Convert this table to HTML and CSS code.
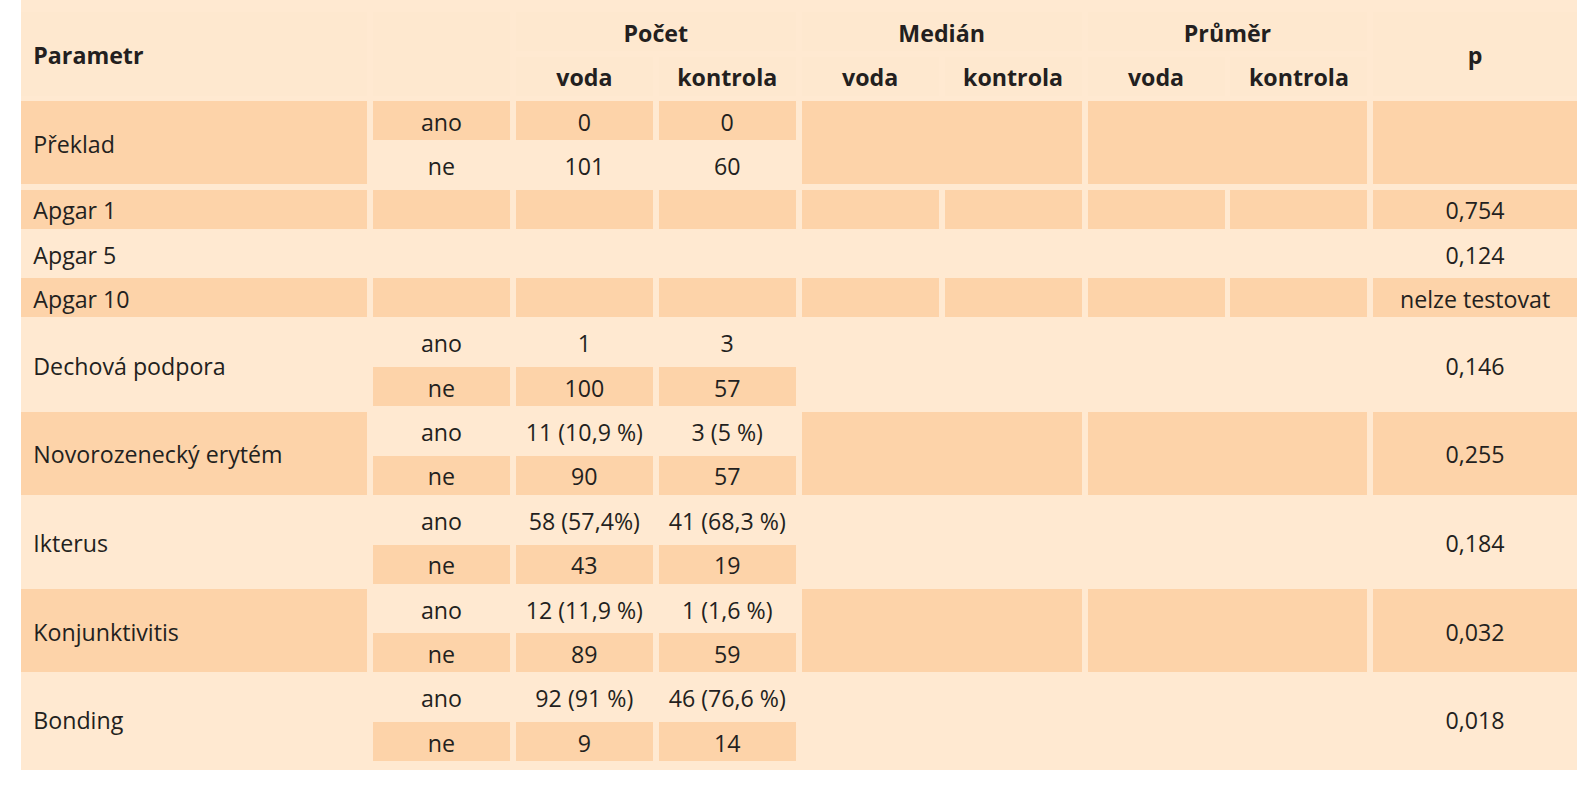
FILE: index.html
```html
<!DOCTYPE html>
<html lang="cs">
<head>
<meta charset="utf-8">
<title>Tabulka</title>
<link rel="stylesheet" href="styles.css">
</head>
<body>
<div class="tbl">
  <!-- header -->
  <div class="h r2 left">Parametr</div>
  <div class="h r2"></div>
  <div class="h s2">Počet</div>
  <div class="h s2">Medián</div>
  <div class="h s2">Průměr</div>
  <div class="h r2">p</div>
  <div class="h">voda</div>
  <div class="h">kontrola</div>
  <div class="h">voda</div>
  <div class="h">kontrola</div>
  <div class="h">voda</div>
  <div class="h">kontrola</div>

  <!-- Překlad -->
  <div class="d r2 left">Překlad</div>
  <div class="d">ano</div>
  <div class="d">0</div>
  <div class="d">0</div>
  <div class="d r2 s2"></div>
  <div class="d r2 s2"></div>
  <div class="d r2"></div>
  <div>ne</div>
  <div>101</div>
  <div>60</div>

  <!-- Apgar 1 -->
  <div class="d left">Apgar 1</div>
  <div class="d"></div>
  <div class="d"></div>
  <div class="d"></div>
  <div class="d"></div>
  <div class="d"></div>
  <div class="d"></div>
  <div class="d"></div>
  <div class="d">0,754</div>

  <!-- Apgar 5 -->
  <div class="left">Apgar 5</div>
  <div class="s7"></div>
  <div>0,124</div>

  <!-- Apgar 10 -->
  <div class="d left">Apgar 10</div>
  <div class="d"></div>
  <div class="d"></div>
  <div class="d"></div>
  <div class="d"></div>
  <div class="d"></div>
  <div class="d"></div>
  <div class="d"></div>
  <div class="d">nelze testovat</div>

  <!-- Dechová podpora -->
  <div class="r2 left">Dechová podpora</div>
  <div>ano</div>
  <div>1</div>
  <div>3</div>
  <div class="r2 s4"></div>
  <div class="r2">0,146</div>
  <div class="d">ne</div>
  <div class="d">100</div>
  <div class="d">57</div>

  <!-- Novorozenecký erytém -->
  <div class="d r2 left">Novorozenecký erytém</div>
  <div>ano</div>
  <div>11 (10,9 %)</div>
  <div>3 (5 %)</div>
  <div class="d r2 s2"></div>
  <div class="d r2 s2"></div>
  <div class="d r2">0,255</div>
  <div class="d">ne</div>
  <div class="d">90</div>
  <div class="d">57</div>

  <!-- Ikterus -->
  <div class="r2 left">Ikterus</div>
  <div>ano</div>
  <div>58 (57,4%)</div>
  <div>41 (68,3 %)</div>
  <div class="r2 s4"></div>
  <div class="r2">0,184</div>
  <div class="d">ne</div>
  <div class="d">43</div>
  <div class="d">19</div>

  <!-- Konjunktivitis -->
  <div class="d r2 left">Konjunktivitis</div>
  <div>ano</div>
  <div>12 (11,9 %)</div>
  <div>1 (1,6 %)</div>
  <div class="d r2 s2"></div>
  <div class="d r2 s2"></div>
  <div class="d r2">0,032</div>
  <div class="d">ne</div>
  <div class="d">89</div>
  <div class="d">59</div>

  <!-- Bonding -->
  <div class="r2 left">Bonding</div>
  <div>ano</div>
  <div>92 (91 %)</div>
  <div>46 (76,6 %)</div>
  <div class="r2 s4"></div>
  <div class="r2">0,018</div>
  <div class="d">ne</div>
  <div class="d">9</div>
  <div class="d">14</div>
</div>
</body>
</html>
```

FILE: styles.css
```css
html, body {
  margin: 0;
  padding: 0;
  background: #ffffff;
}

body {
  font-family: "Open Sans", "Noto Sans", sans-serif;
  font-size: 23.2px;
  line-height: 1.33;
  color: #231f20;
}

.tbl {
  margin-left: 20.7px;
  width: 1556.3px;
  box-sizing: border-box;
  background: #ffe9d1;
  padding: 12.3px 0 9px 0;
  display: grid;
  grid-template-columns: 346.3px repeat(7, 137px) 203.5px;
  grid-auto-rows: 39px;
  column-gap: 5.93px;
  row-gap: 5.36px;
}

.tbl > div {
  display: flex;
  align-items: center;
  justify-content: center;
  white-space: nowrap;
  padding-top: 3px;
  box-sizing: border-box;
}

.tbl > .left {
  justify-content: flex-start;
  padding-left: 12.6px;
}

.h {
  font-weight: 700;
  background: #fee8cf;
}

.d {
  background: #fdd3a9;
}

.r2 {
  grid-row: span 2;
}

.s2 {
  grid-column: span 2;
}

.s4 {
  grid-column: span 4;
}

.s7 {
  grid-column: span 7;
}
```
